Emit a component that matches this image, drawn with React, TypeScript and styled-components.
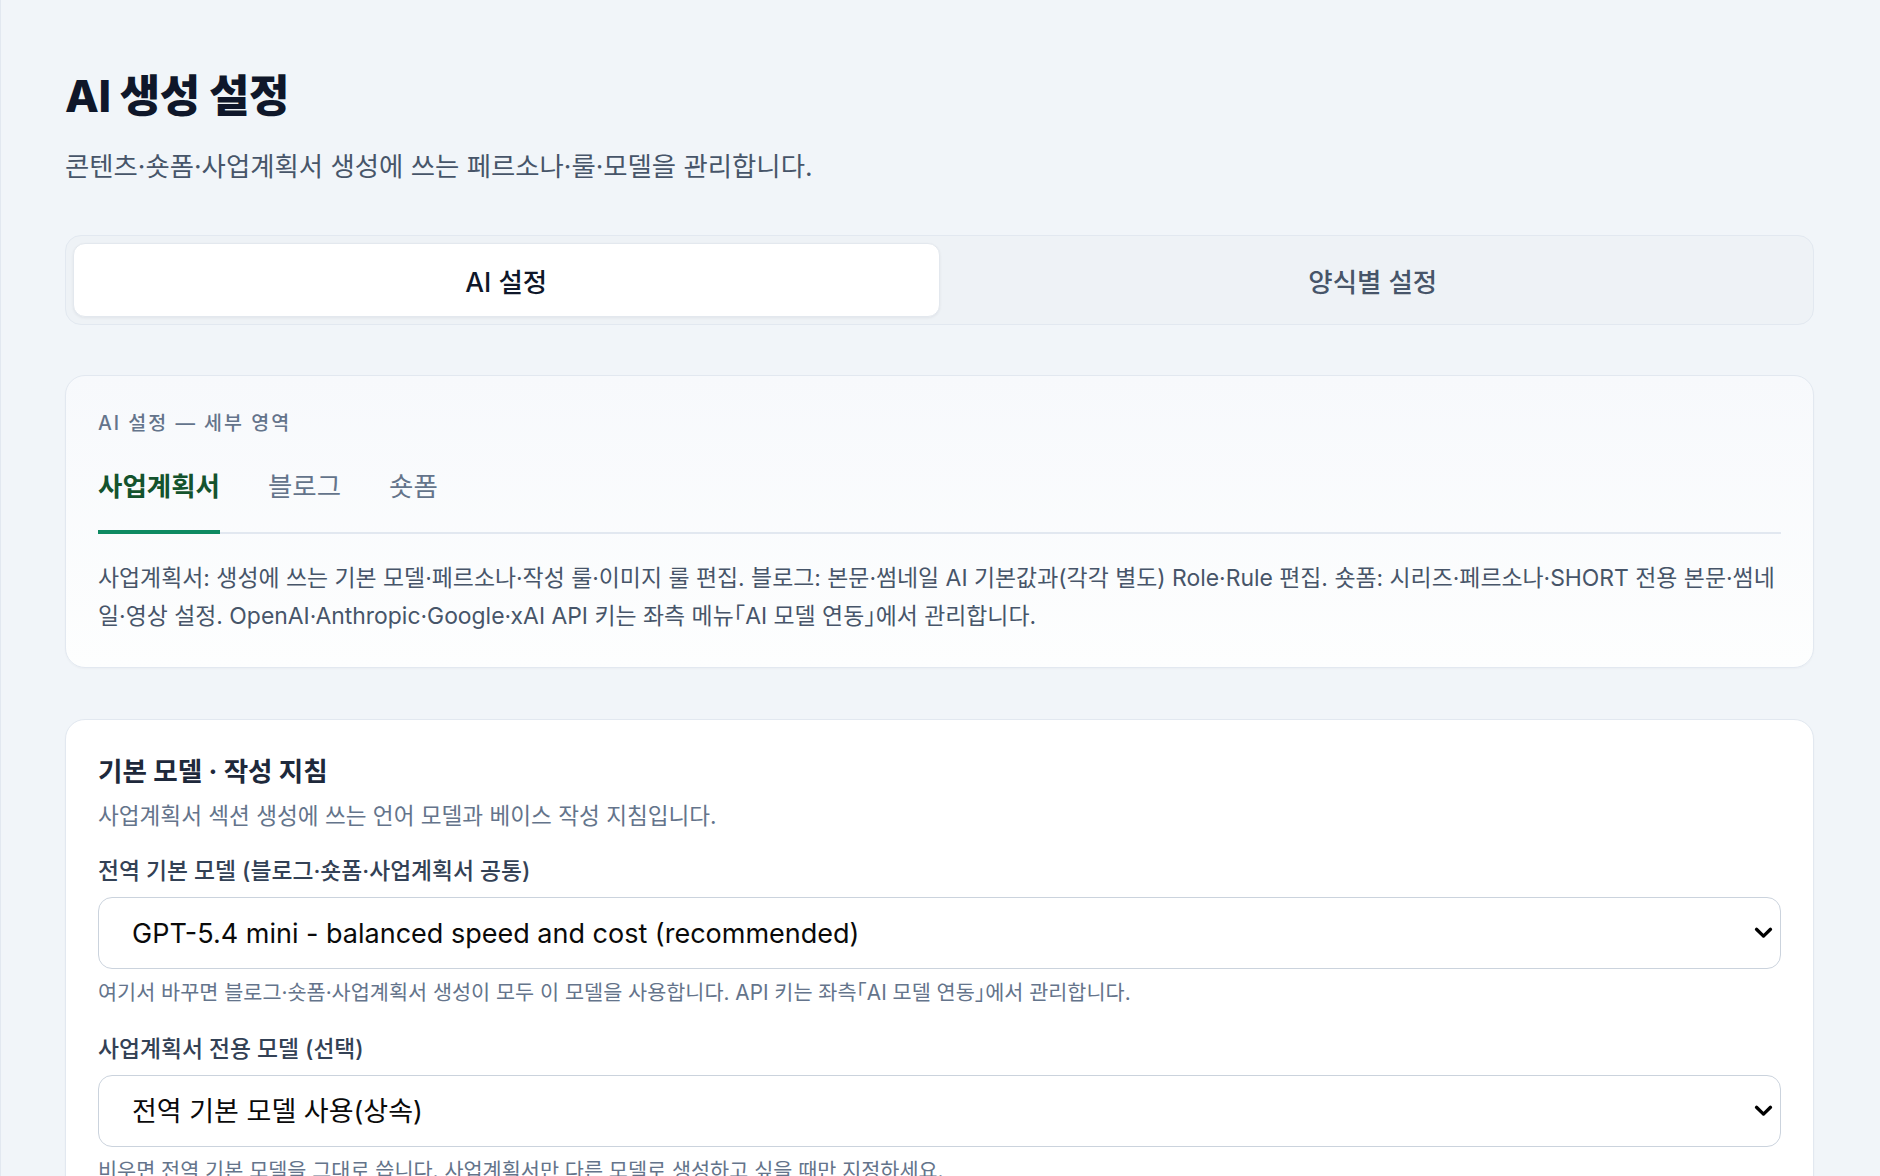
import React from 'react';
import styled, { createGlobalStyle } from 'styled-components';

const GlobalStyle = createGlobalStyle`
  html, body { margin: 0; padding: 0; background: #f1f5f9; }
  body {
    font-family: "Inter", "Noto Sans CJK KR", sans-serif;
    color: #0f172a;
    -webkit-font-smoothing: antialiased;
  }
  * { box-sizing: border-box; }
`;

const Page = styled.main`
  min-height: 100vh;
  border-left: 1px solid #e2e8f0;
  padding: 70px 66px 40px 64px;
`;

const Title = styled.h1`
  margin: 0;
  font-size: 44px;
  line-height: 52px;
  font-weight: 800;
  letter-spacing: -0.01em;
  color: #0f172a;
`;

const Subtitle = styled.p`
  margin: 26px 0 0;
  font-size: 26.4px;
  line-height: 36px;
  font-weight: 400;
  color: #475569;
`;

const Segmented = styled.div`
  margin-top: 51px;
  display: flex;
  padding: 7px;
  border: 1px solid #e2e8f0;
  border-radius: 16px;
  background: #eef2f6;
`;

const Segment = styled.button<{ $active?: boolean }>`
  flex: 1 1 0;
  height: 74px;
  border: 1px solid ${(p) => (p.$active ? '#e3e8ee' : 'transparent')};
  border-radius: 12px;
  background: ${(p) => (p.$active ? '#ffffff' : 'transparent')};
  box-shadow: ${(p) => (p.$active ? '0 1px 3px rgba(15, 23, 42, 0.06)' : 'none')};
  font-family: inherit;
  font-size: 26.5px;
  font-weight: 500;
  color: ${(p) => (p.$active ? '#0f172a' : '#475569')};
  cursor: pointer;
`;

const Card = styled.section<{ $tint?: boolean; $gap: number }>`
  margin-top: ${(p) => p.$gap}px;
  border: 1px solid #e2e8f0;
  border-radius: 20px;
  background: ${(p) => (p.$tint ? 'linear-gradient(180deg, #f7f9fc 0%, #fdfefe 100%)' : '#ffffff')};
  padding: 34px 32px 32px;
  box-shadow: 0 1px 2px rgba(15, 23, 42, 0.03);
`;

const Eyebrow = styled.div`
  font-size: 19.5px;
  line-height: 27px;
  font-weight: 500;
  letter-spacing: 2px;
  color: #64748b;
`;

const SubTabs = styled.div`
  margin-top: 31px;
  display: flex;
  gap: 48px;
  border-bottom: 2px solid #e2e8f0;
`;

const SubTab = styled.button<{ $active?: boolean }>`
  padding: 0 0 26px;
  margin-bottom: -2px;
  border: none;
  border-bottom: 4px solid ${(p) => (p.$active ? '#0e8a62' : 'transparent')};
  background: none;
  font-family: inherit;
  font-size: 26.5px;
  line-height: 36px;
  font-weight: ${(p) => (p.$active ? 700 : 400)};
  color: ${(p) => (p.$active ? '#14532d' : '#64748b')};
  cursor: pointer;
`;

const Description = styled.p`
  margin: 25px 0 0;
  font-size: 22.9px;
  line-height: 38px;
  color: #475569;
  font-feature-settings: "halt";
`;

const SectionTitle = styled.h2`
  margin: 0;
  font-size: 26.6px;
  line-height: 34px;
  font-weight: 700;
  color: #1e293b;
`;

const SectionDesc = styled.p`
  margin: 13px 0 0;
  font-size: 22.6px;
  line-height: 30px;
  color: #64748b;
`;

const Field = styled.div<{ $gap: number }>`
  margin-top: ${(p) => p.$gap}px;
  display: flex;
  flex-direction: column;
`;

const Label = styled.label`
  font-size: 22.8px;
  line-height: 30px;
  font-weight: 500;
  color: #334155;
`;

const SelectWrap = styled.div`
  position: relative;
  margin-top: 11px;
`;

const Select = styled.select`
  width: 100%;
  height: 72px;
  appearance: none;
  -webkit-appearance: none;
  border: 1.5px solid #cbd3dd;
  border-radius: 14px;
  background: #ffffff;
  padding: 0 60px 0 33px;
  font-family: inherit;
  font-size: 27px;
  color: #0a0a0a;
  outline: none;
`;

const Chevron = styled.svg`
  position: absolute;
  right: 8px;
  top: 50%;
  transform: translateY(-50%);
  pointer-events: none;
`;

const Help = styled.p`
  margin: 10px 0 0;
  font-size: 20.75px;
  line-height: 28px;
  color: #64748b;
  font-feature-settings: "halt";
`;

function ModelSelect({ id, value, options }: { id: string; value: string; options: string[] }) {
  return (
    <SelectWrap>
      <Select id={id} defaultValue={value}>
        {options.map((o) => (
          <option key={o} value={o}>
            {o}
          </option>
        ))}
      </Select>
      <Chevron width="19" height="13" viewBox="0 0 19 13" aria-hidden="true">
        <path d="M2.5 2.8 L9.5 9.6 L16.5 2.8" fill="none" stroke="#000" strokeWidth="3.3" strokeLinecap="round" strokeLinejoin="round" />
      </Chevron>
    </SelectWrap>
  );
}

export default function App() {
  const [top, setTop] = React.useState(0);
  const [sub, setSub] = React.useState(0);
  const subTabs = ['사업계획서', '블로그', '숏폼'];
  return (
    <>
      <GlobalStyle />
      <Page>
        <Title>AI 생성 설정</Title>
        <Subtitle>콘텐츠·숏폼·사업계획서 생성에 쓰는 페르소나·룰·모델을 관리합니다.</Subtitle>

        <Segmented>
          <Segment $active={top === 0} onClick={() => setTop(0)}>
            AI 설정
          </Segment>
          <Segment $active={top === 1} onClick={() => setTop(1)}>
            양식별 설정
          </Segment>
        </Segmented>

        <Card $tint $gap={50}>
          <Eyebrow>AI 설정 — 세부 영역</Eyebrow>
          <SubTabs>
            {subTabs.map((t, i) => (
              <SubTab key={t} $active={sub === i} onClick={() => setSub(i)}>
                {t}
              </SubTab>
            ))}
          </SubTabs>
          <Description>
            사업계획서: 생성에 쓰는 기본 모델·페르소나·작성 룰·이미지 룰 편집. 블로그: 본문·썸네일 AI 기본값과(각각 별도) Role·Rule 편집. 숏폼: 시리즈·페르소나·SHORT 전용 본문·썸네일·영상 설정. OpenAI·Anthropic·Google·xAI API 키는 좌측 메뉴「AI 모델 연동」에서 관리합니다.
          </Description>
        </Card>

        <Card $gap={51}>
          <SectionTitle>기본 모델 · 작성 지침</SectionTitle>
          <SectionDesc>사업계획서 섹션 생성에 쓰는 언어 모델과 베이스 작성 지침입니다.</SectionDesc>

          <Field $gap={25}>
            <Label htmlFor="global-model">전역 기본 모델 (블로그·숏폼·사업계획서 공통)</Label>
            <ModelSelect
              id="global-model"
              value="GPT-5.4 mini - balanced speed and cost (recommended)"
              options={['GPT-5.4 mini - balanced speed and cost (recommended)', 'GPT-5.4 - highest quality']}
            />
            <Help>여기서 바꾸면 블로그·숏폼·사업계획서 생성이 모두 이 모델을 사용합니다. API 키는 좌측「AI 모델 연동」에서 관리합니다.</Help>
          </Field>

          <Field $gap={27}>
            <Label htmlFor="plan-model">사업계획서 전용 모델 (선택)</Label>
            <ModelSelect id="plan-model" value="전역 기본 모델 사용(상속)" options={['전역 기본 모델 사용(상속)']} />
            <Help>비우면 전역 기본 모델을 그대로 씁니다. 사업계획서만 다른 모델로 생성하고 싶을 때만 지정하세요.</Help>
          </Field>
        </Card>
      </Page>
    </>
  );
}
